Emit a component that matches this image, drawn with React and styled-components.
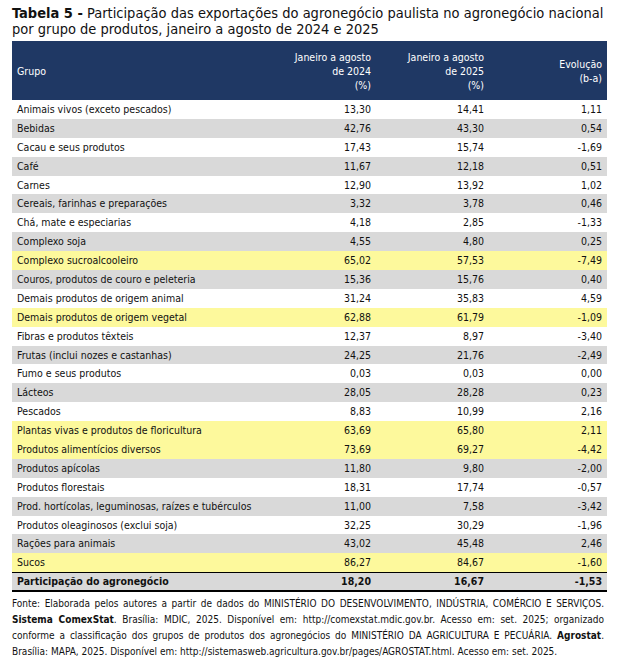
import React from 'react'
import styled, { createGlobalStyle } from 'styled-components'

const GlobalStyle = createGlobalStyle`
    body {
        margin: 0;
        background: #ffffff;
        font-family: 'DejaVu Sans Condensed', 'DejaVu Sans', sans-serif;
        color: #111111;
    }
`

const rows = [
    ['Animais vivos (exceto pescados)', '13,30', '14,41', '1,11'],
    ['Bebidas', '42,76', '43,30', '0,54'],
    ['Cacau e seus produtos', '17,43', '15,74', '-1,69'],
    ['Café', '11,67', '12,18', '0,51'],
    ['Carnes', '12,90', '13,92', '1,02'],
    ['Cereais, farinhas e preparações', '3,32', '3,78', '0,46'],
    ['Chá, mate e especiarias', '4,18', '2,85', '-1,33'],
    ['Complexo soja', '4,55', '4,80', '0,25'],
    ['Complexo sucroalcooleiro', '65,02', '57,53', '-7,49', true],
    ['Couros, produtos de couro e peleteria', '15,36', '15,76', '0,40'],
    ['Demais produtos de origem animal', '31,24', '35,83', '4,59'],
    ['Demais produtos de origem vegetal', '62,88', '61,79', '-1,09', true],
    ['Fibras e produtos têxteis', '12,37', '8,97', '-3,40'],
    ['Frutas (inclui nozes e castanhas)', '24,25', '21,76', '-2,49'],
    ['Fumo e seus produtos', '0,03', '0,03', '0,00'],
    ['Lácteos', '28,05', '28,28', '0,23'],
    ['Pescados', '8,83', '10,99', '2,16'],
    ['Plantas vivas e produtos de floricultura', '63,69', '65,80', '2,11', true],
    ['Produtos alimentícios diversos', '73,69', '69,27', '-4,42', true],
    ['Produtos apícolas', '11,80', '9,80', '-2,00'],
    ['Produtos florestais', '18,31', '17,74', '-0,57'],
    ['Prod. hortícolas, leguminosas, raízes e tubérculos', '11,00', '7,58', '-3,42'],
    ['Produtos oleaginosos (exclui soja)', '32,25', '30,29', '-1,96'],
    ['Rações para animais', '43,02', '45,48', '2,46'],
    ['Sucos', '86,27', '84,67', '-1,60', true],
]

const Page = styled.div`
    padding: 5px 20px 0 12px;
`

const Title = styled.h1`
    margin: 0 0 4px;
    font-size: 14.5px;
    line-height: 16px;
    font-weight: 400;
    b {
        font-weight: 700;
    }
`

const Table = styled.div`
    display: grid;
    grid-template-columns: 251px 113px 113px 118px;
    width: 595px;
    font-size: 10.5px;
`

const HeadCell = styled.div`
    background: #1f3864;
    color: #ffffff;
    height: 59px;
    display: flex;
    align-items: center;
    justify-content: ${props => props.left ? 'flex-start' : 'flex-end'};
    text-align: ${props => props.left ? 'left' : 'right'};
    padding: ${props => props.left ? '0 0 0 5px' : '0 5px 0 0'};
    line-height: 14px;
`

const Cell = styled.div`
    box-sizing: border-box;
    height: 18.9px;
    line-height: 18.9px;
    padding: ${props => props.left ? '0 0 0 5px' : '0 5px 0 0'};
    text-align: ${props => props.left ? 'left' : 'right'};
    white-space: nowrap;
    background: ${props => props.yellow ? '#fdf99c' : props.shade ? '#d9d9d9' : '#ffffff'};
`

const TotalCell = styled(Cell)`
    font-weight: 700;
    background: #d9d9d9;
    border-top: 1px solid #000000;
    border-bottom: 2px solid #000000;
    height: 19.5px;
    line-height: 16px;
`

const Footer = styled.p`
    margin: 4px 0 0;
    width: 592px;
    font-size: 10px;
    line-height: 16px;
    text-align: justify;
    b {
        font-weight: 700;
    }
`

export default function App() {
    return (
        <Page>
            <GlobalStyle />
            <Title>
                <b>Tabela 5 -</b> Participação das exportações do agronegócio paulista no agronegócio nacional por grupo de produtos, janeiro a agosto de 2024 e 2025
            </Title>
            <Table>
                <HeadCell left>Grupo</HeadCell>
                <HeadCell>Janeiro a agosto<br />de 2024<br />(%)</HeadCell>
                <HeadCell>Janeiro a agosto<br />de 2025<br />(%)</HeadCell>
                <HeadCell>Evolução<br />(b-a)</HeadCell>
                {rows.map(([name, a, b, ev, yellow], i) => {
                    const shade = i % 2 === 1
                    return (
                        <React.Fragment key={`row_${i}`}>
                            <Cell left yellow={yellow} shade={shade}>{name}</Cell>
                            <Cell yellow={yellow} shade={shade}>{a}</Cell>
                            <Cell yellow={yellow} shade={shade}>{b}</Cell>
                            <Cell yellow={yellow} shade={shade}>{ev}</Cell>
                        </React.Fragment>
                    )
                })}
                <TotalCell left>Participação do agronegócio</TotalCell>
                <TotalCell>18,20</TotalCell>
                <TotalCell>16,67</TotalCell>
                <TotalCell>-1,53</TotalCell>
            </Table>
            <Footer>
                Fonte: Elaborada pelos autores a partir de dados do MINISTÉRIO DO DESENVOLVIMENTO, INDÚSTRIA, COMÉRCIO E SERVIÇOS. <b>Sistema ComexStat</b>. Brasília: MDIC, 2025. Disponível em: http://comexstat.mdic.gov.br. Acesso em: set. 2025; organizado conforme a classificação dos grupos de produtos dos agronegócios do MINISTÉRIO DA AGRICULTURA E PECUÁRIA. <b>Agrostat</b>. Brasília: MAPA, 2025. Disponível em: http://sistemasweb.agricultura.gov.br/pages/AGROSTAT.html. Acesso em: set. 2025.
            </Footer>
        </Page>
    )
}
